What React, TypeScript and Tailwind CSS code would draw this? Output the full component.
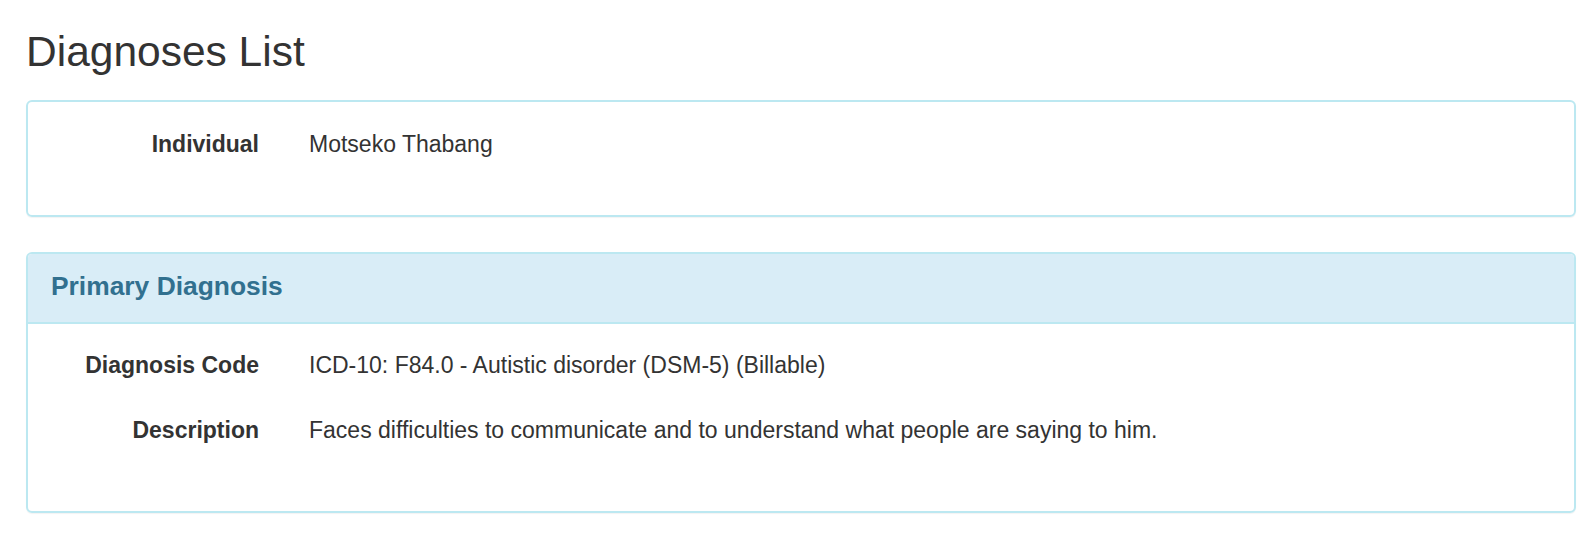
const primaryRows = [
    {label: "Diagnosis Code", value: "ICD-10: F84.0 - Autistic disorder (DSM-5) (Billable)"},
    {label: "Description", value: "Faces difficulties to communicate and to understand what people are saying to him."},
]

function Row({label, value}: {label: string, value: string}){
    return(
        <div className="flex h-[32px] leading-[32px]">
            <div className="w-[208px] shrink-0 text-right font-bold">{label}</div>
            <div className="ml-[50px]">{value}</div>
        </div>
    )
}

export default function App(){
    return(
        <div className="min-h-[533px] bg-white pl-[26px] pr-[13px] text-[23px] text-[#333] font-['Liberation_Sans',Arial,sans-serif]">
            <h1 className="pt-[30px] mb-[26px] text-[42.5px] leading-[44px] font-normal">Diagnoses List</h1>

            <div className="border-2 border-[#bce8f1] rounded-[6px] shadow-[0_1px_1px_rgba(0,0,0,0.05)] px-[23px] pt-[26px] pb-[55px]">
                <Row label="Individual" value="Motseko Thabang" />
            </div>

            <div className="mt-[35px] border-2 border-[#bce8f1] rounded-[6px] overflow-hidden shadow-[0_1px_1px_rgba(0,0,0,0.05)]">
                <div className="h-[70px] bg-[#d9edf7] border-b-2 border-[#bce8f1] px-[23px] flex items-center pb-[4px]">
                    <h3 className="text-[26.4px] leading-none font-bold text-[#31708f]">Primary Diagnosis</h3>
                </div>
                <div className="px-[23px] pt-[25px] pb-[65px] flex flex-col gap-[33px]">
                    {primaryRows.map((row) => (
                        <Row key={row.label} label={row.label} value={row.value} />
                    ))}
                </div>
            </div>
        </div>
    )
}
